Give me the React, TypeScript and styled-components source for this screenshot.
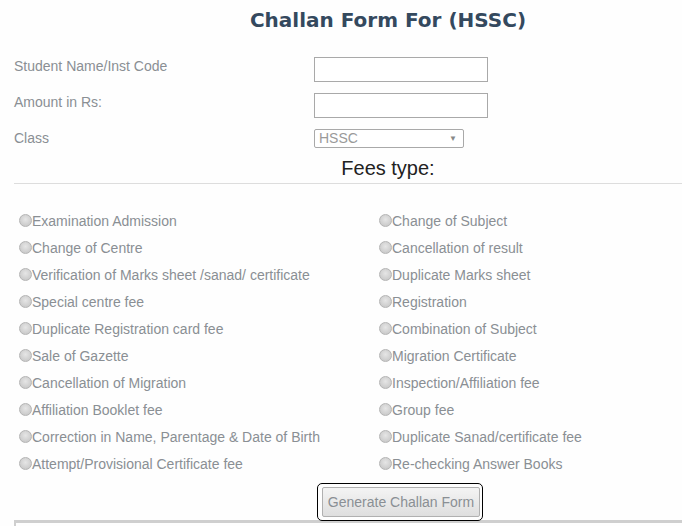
import React from "react"
import styled, {createGlobalStyle} from "styled-components"

const GlobalStyle = createGlobalStyle`
	html, body {
		margin: 0;
		padding: 0;
		background: #fefefe;
		overflow: hidden;
	}
	body {
		font-family: "Liberation Sans", Arial, sans-serif;
	}
`

const leftFees = [
	"Examination Admission",
	"Change of Centre",
	"Verification of Marks sheet /sanad/ certificate",
	"Special centre fee",
	"Duplicate Registration card fee",
	"Sale of Gazette",
	"Cancellation of Migration",
	"Affiliation Booklet fee",
	"Correction in Name, Parentage & Date of Birth",
	"Attempt/Provisional Certificate fee",
]

const rightFees = [
	"Change of Subject",
	"Cancellation of result",
	"Duplicate Marks sheet",
	"Registration",
	"Combination of Subject",
	"Migration Certificate",
	"Inspection/Affiliation fee",
	"Group fee",
	"Duplicate Sanad/certificate fee",
	"Re-checking Answer Books",
]

// the form is wider than the window, its right part is cut off
const Page = styled.div`
	width: 748px;
	height: 526px;
	padding: 0 0 0 14px;
`

const Title = styled.h2`
	margin: 0;
	padding-top: 8px;
	height: 55px;
	box-sizing: border-box;
	text-align: center;
	font-family: "DejaVu Sans", Verdana, sans-serif;
	font-weight: bold;
	font-size: 20px;
	line-height: 24px;
	color: #34495e;
`

const FieldRow = styled.div<{$h?: number}>`
	display: flex;
	align-items: flex-start;
	height: ${({$h}) => $h ?? 36}px;
`

const Label = styled.label`
	width: 300px;
	padding-top: 1px;
	font-size: 14px;
	line-height: 20px;
	color: #8a8f94;
`

const TextInput = styled.input`
	box-sizing: border-box;
	width: 174px;
	height: 25px;
	margin: 2px 0 0;
	border: 1px solid #a9a9a9;
	background: #fff;
	padding: 2px 4px;
	font-size: 13px;
`

const SelectBox = styled.div`
	position: relative;
	box-sizing: border-box;
	width: 150px;
	height: 19px;
	margin-top: 2px;
	border: 1px solid #a9a9a9;
	border-radius: 2px;
	background: #fff;
	padding-left: 4px;
	font-size: 14px;
	line-height: 17px;
	color: #9a9a9a;

	&::after {
		content: "▼";
		position: absolute;
		right: 6px;
		top: 0;
		font-size: 8px;
		color: #888;
	}
`

const FeesHeading = styled.div`
	text-align: center;
	font-size: 20px;
	line-height: 24px;
	color: #222;
	padding-top: 2px;
	height: 27px;
	border-bottom: 1px solid #ddd;
`

const FeesGrid = styled.div`
	display: grid;
	grid-template-columns: 360px 360px;
	padding-top: 23px;
`

const FeeColumn = styled.div`
	display: flex;
	flex-direction: column;
`

const FeeOption = styled.label`
	display: flex;
	align-items: center;
	height: 27px;
	font-size: 14px;
	color: #8a8f94;
	white-space: nowrap;
`

const RadioDot = styled.span`
	display: inline-block;
	width: 11px;
	height: 11px;
	margin: 0 0 0 5px;
	border-radius: 50%;
	border: 1px solid #b4b4b4;
	background: radial-gradient(circle at 50% 40%, #e6e6e6 0%, #d0d0d0 60%, #c2c2c2 100%);
	flex-shrink: 0;
`

const ButtonRow = styled.div`
	display: flex;
	align-items: flex-start;
	padding: 6px 0 0 303px;
	height: 37px;
`

const FocusRing = styled.div`
	display: flex;
	padding: 3px 2px 3px 4px;
	border: 1px solid #000;
	border-radius: 5px;
`

const GenerateButton = styled.button`
	box-sizing: border-box;
	width: 158px;
	height: 30px;
	padding: 0;
	border: 1px solid #b0b0b0;
	border-radius: 2px;
	background: linear-gradient(#f4f4f4, #dedede);
	font-family: "Liberation Sans", Arial, sans-serif;
	font-size: 14px;
	color: #8a8f94;
	white-space: nowrap;
	outline: none;
`

const BottomBox = styled.div`
	height: 20px;
	border-top: 3px solid #cfcfcf;
	border-left: 2px solid #cfcfcf;
`

export default function App() {
	return (
		<>
			<GlobalStyle />
			<Page>
				<Title>Challan Form For (HSSC)</Title>
				<FieldRow>
					<Label>Student Name/Inst Code</Label>
					<TextInput type="text" />
				</FieldRow>
				<FieldRow>
					<Label>Amount in Rs:</Label>
					<TextInput type="text" />
				</FieldRow>
				<FieldRow $h={27}>
					<Label>Class</Label>
					<SelectBox>HSSC</SelectBox>
				</FieldRow>
				<FeesHeading>Fees type:</FeesHeading>
				<FeesGrid>
					<FeeColumn>
						{leftFees.map(f => (
							<FeeOption key={f}>
								<RadioDot />
								{f}
							</FeeOption>
						))}
					</FeeColumn>
					<FeeColumn>
						{rightFees.map(f => (
							<FeeOption key={f}>
								<RadioDot />
								{f}
							</FeeOption>
						))}
					</FeeColumn>
				</FeesGrid>
				<ButtonRow>
					<FocusRing>
						<GenerateButton>Generate Challan Form</GenerateButton>
					</FocusRing>
				</ButtonRow>
				<BottomBox />
			</Page>
		</>
	)
}
